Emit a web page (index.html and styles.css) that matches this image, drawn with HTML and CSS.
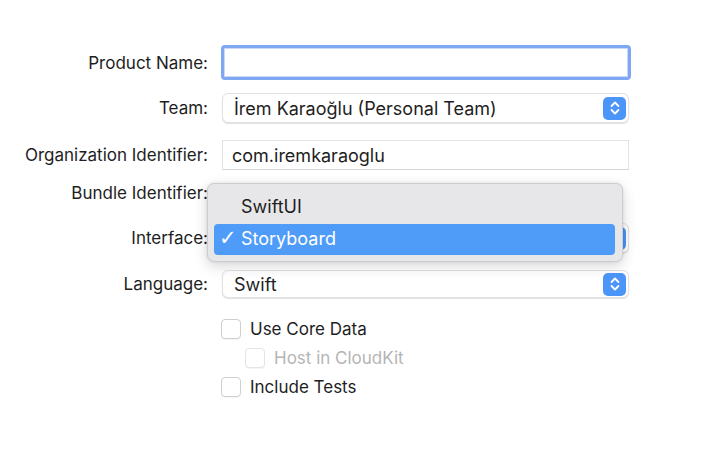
FILE: index.html
```html
<!DOCTYPE html>
<html>
<head>
<meta charset="utf-8">
<link rel="stylesheet" href="styles.css">
</head>
<body>
<div class="form">
  <div class="row r-name">
    <div class="label">Product Name:</div>
    <div class="field focus"></div>
  </div>
  <div class="row r-team">
    <div class="label">Team:</div>
    <div class="popup"><span class="ptext">İrem Karaoğlu (Personal Team)</span><span class="stepper"><svg width="12" height="16" viewBox="0 0 12 16"><path d="M2.5 6 L6 2.5 L9.5 6 M2.5 10 L6 13.5 L9.5 10" fill="none" stroke="#fff" stroke-width="1.8" stroke-linecap="round" stroke-linejoin="round"/></svg></span></div>
  </div>
  <div class="row r-org">
    <div class="label">Organization Identifier:</div>
    <div class="field plain">com.iremkaraoglu</div>
  </div>
  <div class="row r-bundle">
    <div class="label">Bundle Identifier:</div>
    <div class="static"></div>
  </div>
  <div class="row r-iface">
    <div class="label">Interface:</div>
    <div class="popup"><span class="ptext"></span><span class="stepper"></span></div>
  </div>
  <div class="row r-lang">
    <div class="label">Language:</div>
    <div class="popup"><span class="ptext">Swift</span><span class="stepper"><svg width="12" height="16" viewBox="0 0 12 16"><path d="M2.5 6 L6 2.5 L9.5 6 M2.5 10 L6 13.5 L9.5 10" fill="none" stroke="#fff" stroke-width="1.8" stroke-linecap="round" stroke-linejoin="round"/></svg></span></div>
  </div>
  <div class="checks">
    <label class="check"><span class="box"></span><span>Use Core Data</span></label>
    <label class="check sub disabled"><span class="box"></span><span>Host in CloudKit</span></label>
    <label class="check"><span class="box"></span><span>Include Tests</span></label>
  </div>

  <div class="menu">
    <div class="item">SwiftUI</div>
    <div class="item selected"><span class="tick">✓</span>Storyboard</div>
  </div>
</div>
</body>
</html>
```
FILE: styles.css
```css
* { box-sizing: border-box; }
html, body { margin: 0; padding: 0; background: #fff; }
body {
  width: 720px; height: 449px; overflow: hidden;
  font-family: "Inter", "Liberation Sans", sans-serif;
  font-size: 17px; color: #1e1e1e;
}
.form { position: relative; padding-top: 45px; }
.row { display: flex; align-items: center; }
.label { width: 208px; text-align: right; flex: none; white-space: nowrap; }
.row > :nth-child(2) { margin-left: 14px; width: 407px; }
.r-name { height: 35px; }
.r-name .field { margin-left: 13px; width: 410px; }
.r-team { height: 30px; margin-top: 13px; }
.r-org { height: 30px; margin-top: 17px; }
.r-bundle { height: 30px; margin-top: 8px; }
.r-iface { height: 30px; margin-top: 15px; }
.r-lang { height: 28px; margin-top: 17px; }

.field { height: 100%; background: #fff; }
.field.focus {
  border: 3px solid #7fa7f2; border-radius: 4px;
  box-shadow: inset 0 0 0 1px #c9d9f7;
}
.field.plain {
  border: 1px solid #e3e3e3; border-bottom-color: #d6d6d6;
  padding-left: 9px; display: flex; align-items: center; font-size: 18px;
}
.popup {
  height: 100%; background: #fff; border-radius: 6px;
  border: 1px solid #e1e1e1; box-shadow: 0 1px 1px rgba(0,0,0,0.12);
  display: flex; align-items: center; justify-content: space-between;
  padding: 0 2px 0 11px; font-size: 18px;
}
.stepper {
  width: 23px; height: 23px; border-radius: 5px; background: #4c95f8;
  display: flex; align-items: center; justify-content: center;
}

.checks { margin-left: 221px; margin-top: 21px; display: flex; flex-direction: column; gap: 9px; }
.check { display: flex; align-items: center; gap: 9px; height: 20px; }
.check .box {
  width: 20px; height: 20px; border: 1px solid #cfcfcf; border-radius: 4px; background: #fff;
  box-shadow: 0 1px 0 rgba(0,0,0,0.04);
}
.check.sub { margin-left: 24px; }
.check.disabled { color: #b5b5b5; }
.check.disabled .box { border-color: #e4e4e4; }

.menu {
  position: absolute; left: 207px; top: 183px; width: 416px; height: 79px;
  background: #e7e7e9; border: 1px solid #cdcdcf; border-radius: 7px;
  box-shadow: 0 4px 14px rgba(0,0,0,0.16), 0 0 3px rgba(0,0,0,0.1);
  padding: 7px 7px 0 6px; font-size: 18px;
}
.item { height: 31px; display: flex; align-items: center; padding-left: 27px; margin-bottom: 2px; position: relative; }
.item.selected { background: #4f9cf8; color: #fff; border-radius: 4px; padding-bottom: 2px; }
.tick { position: absolute; left: 5px; top: 2px; font-size: 21px; font-family: "DejaVu Sans", sans-serif; }
```
